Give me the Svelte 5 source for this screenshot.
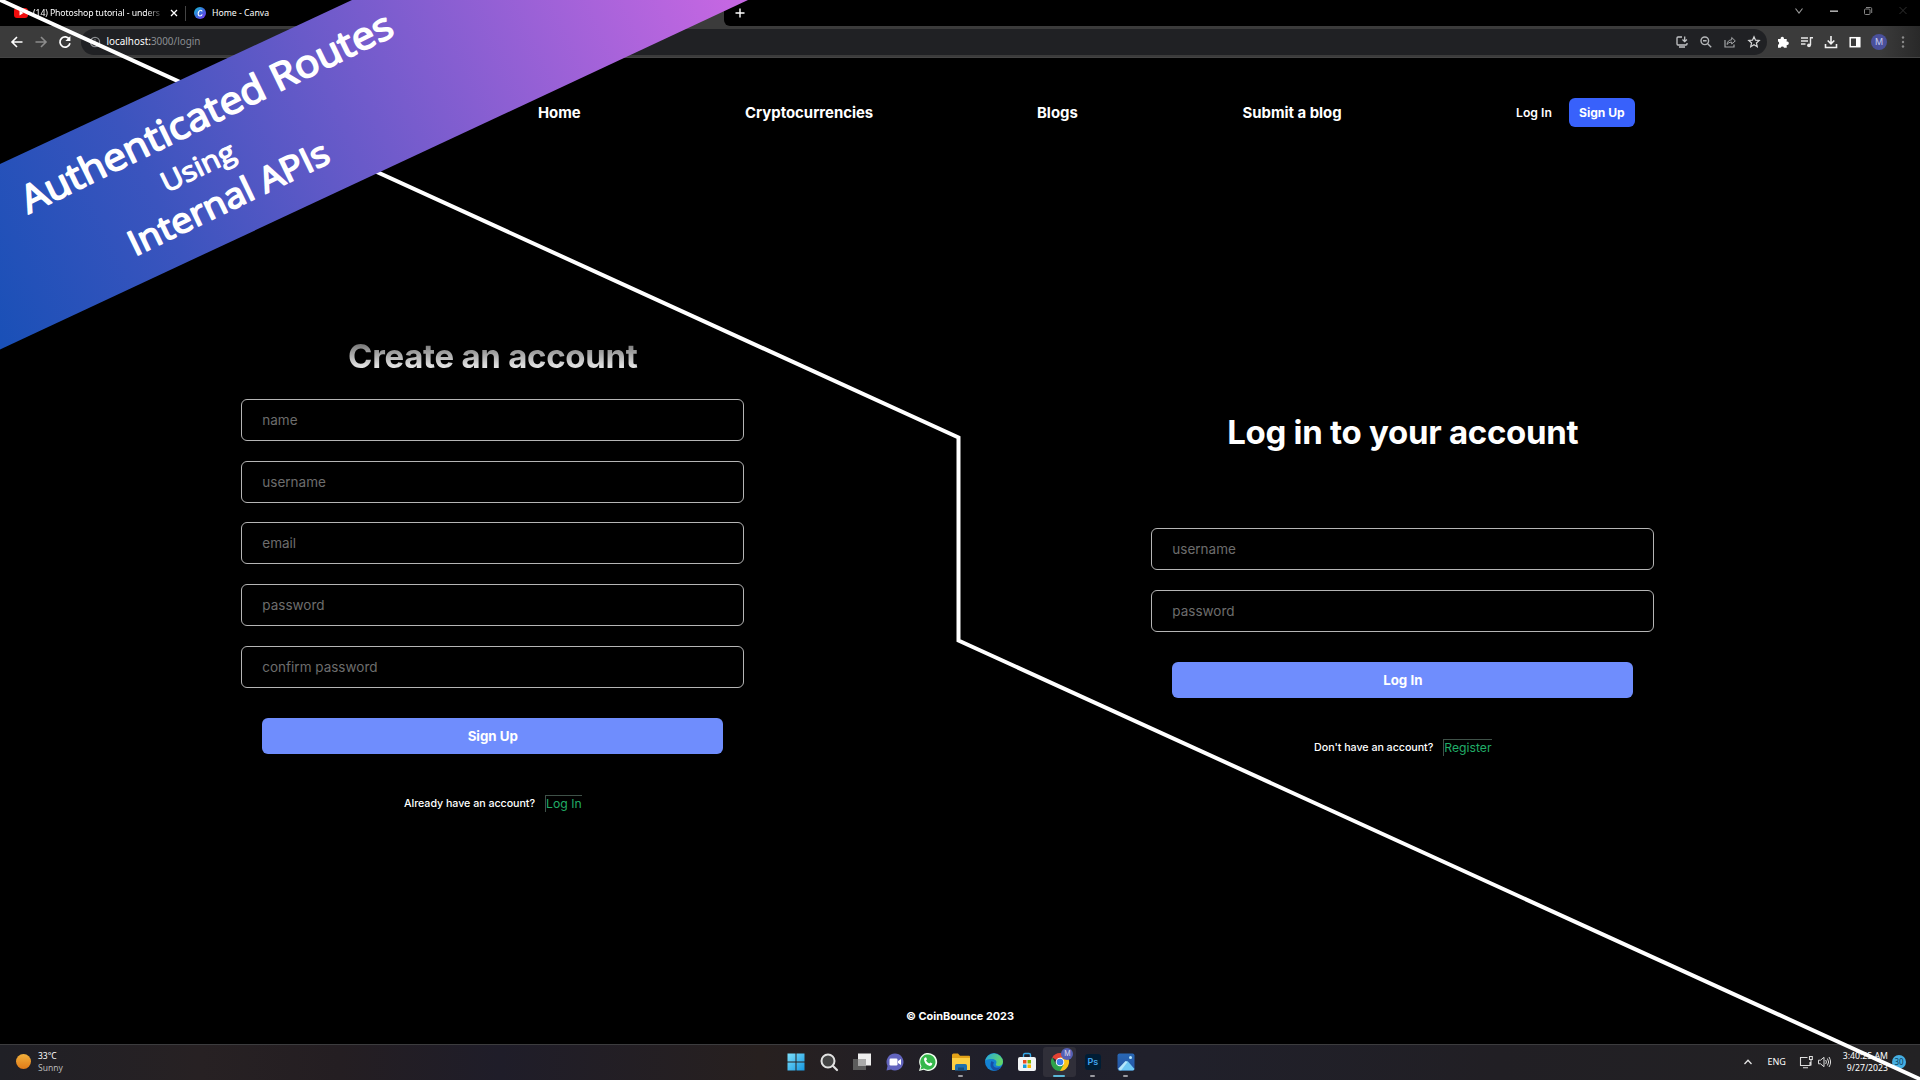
<script>
  const signupFields = ['name', 'username', 'email', 'password', 'confirm password'];
  const loginFields = ['username', 'password'];
</script>

<div class="desktop">
  <div class="tabs">
    <div class="tab first">
      <svg class="yt" width="16" height="16" viewBox="0 0 16 16"><rect x="1" y="3" width="14" height="10" rx="3" fill="#f00c0c" /><path d="M6.5 5.5v5l4-2.5z" fill="#fff" /></svg>
      <span class="tabtitle">(14) Photoshop tutorial - unders</span>
      <svg width="8" height="8" viewBox="0 0 8 8"><path d="M1 1l6 6M7 1l-6 6" stroke="#fff" stroke-width="1.3" /></svg>
    </div>
    <i class="sep"></i>
    <div class="tab second">
      <svg width="12" height="12" viewBox="0 0 12 12"><defs><linearGradient id="cv" x1="0" y1="0" x2="1" y2="1"><stop offset="0" stop-color="#16c2cf" /><stop offset=".5" stop-color="#3b6fe0" /><stop offset="1" stop-color="#7b2ff0" /></linearGradient></defs><circle cx="6" cy="6" r="6" fill="url(#cv)" /><path d="M8 4.6C8 3 5.9 2.8 4.8 4.6S4 9 5.800 9 8 8 8.200 7.400" fill="none" stroke="#fff" stroke-width="1.100" /></svg>
      <span>Home - Canva</span>
    </div>
    <div class="active"></div>
    <div class="strip">
      <svg width="10" height="10" viewBox="0 0 10 10"><path d="M5 .5v9M.5 5h9" stroke="#fff" stroke-width="1.400" /></svg>
      <div class="win">
        <svg width="12" height="12" viewBox="0 0 12 12"><path d="M2.500 3.500L6 8l3.500-4.500" fill="none" stroke="#9a9a9a" stroke-width="1.100" /></svg>
        <svg width="12" height="12" viewBox="0 0 12 12"><path d="M2 6.200h8" stroke="#aaa" stroke-width="1.600" /></svg>
        <svg width="12" height="12" viewBox="0 0 12 12"><rect x="2.500" y="4" width="5.500" height="5.500" rx="1" fill="none" stroke="#858585" /><path d="M4 2.500h4.500q1.200 0 1.200 1.200V8" fill="none" stroke="#858585" /></svg>
        <svg width="12" height="12" viewBox="0 0 12 12"><path d="M2.500 2l7 7M9.500 2l-7 7" stroke="#303030" /></svg>
      </div>
    </div>
  </div>

  <div class="toolbar">
    <div class="nav">
      <svg width="14" height="14" viewBox="0 0 14 14"><path d="M12.500 7H2.300M7 2L2 7l5 5" fill="none" stroke="#fff" stroke-width="1.600" /></svg>
      <svg width="14" height="14" viewBox="0 0 14 14"><path d="M1.500 7h10.200M7 2l5 5-5 5" fill="none" stroke="#8c8c8c" stroke-width="1.600" /></svg>
      <svg width="14" height="14" viewBox="0 0 14 14"><path d="M11.500 4.500A5.100 5.100 0 1 0 12 8.300" fill="none" stroke="#fff" stroke-width="1.700" /><path d="M12.400 1v5h-5z" fill="#fff" /></svg>
    </div>
    <div class="url">
      <svg width="12" height="12" viewBox="0 0 12 12"><circle cx="6" cy="6" r="4.600" fill="none" stroke="#8a8d91" stroke-width="1.200" /><path d="M6 5.300v3.300M6 3.200v1.200" stroke="#8a8d91" stroke-width="1.200" /></svg>
      <span class="addr">localhost:<em>3000/login</em></span>
      <div class="inurl">
        <svg width="14" height="14" viewBox="0 0 14 14"><path d="M7 2H3q-1 0-1 1v6q0 1 1 1h8q1 0 1-1V8M4 12h6M9.700 1.500v5M7.500 4.500L9.700 6.700l2.200-2.200" fill="none" stroke="#c2c4c6" stroke-width="1.300" /></svg>
        <svg width="14" height="14" viewBox="0 0 14 14"><circle cx="5.800" cy="5.800" r="3.800" fill="none" stroke="#b4b6b8" stroke-width="1.400" /><path d="M8.700 8.700l3.500 3.500M4 5.800h3.600" stroke="#b4b6b8" stroke-width="1.400" /></svg>
        <svg width="14" height="14" viewBox="0 0 14 14"><path d="M2 5v7h9V9.500" fill="none" stroke="#a4a6a8" stroke-width="1.200" /><path d="M4 9.500q.5-4.500 4.700-4.700V2.500l3.600 3.400L8.700 9V7Q5.500 7 4 9.500z" fill="none" stroke="#a4a6a8" stroke-width="1" /></svg>
        <svg width="14" height="14" viewBox="0 0 14 14"><path d="M7 1.700l1.500 3.500 3.700.3-2.800 2.500.9 3.700L7 9.700l-3.300 2 .9-3.700L1.800 5.500l3.700-.3z" fill="none" stroke="#d6d7d8" stroke-width="1.200" /></svg>
      </div>
    </div>
    <div class="ext">
      <svg width="14" height="14" viewBox="0 0 14 14"><path d="M2 4h2.700a1.700 1.700 0 1 1 3.200 0h2.800v2.700a1.700 1.700 0 1 1 0 3.300v2.700H8a1.700 1.700 0 0 0-3.300 0H2V9.800a1.700 1.700 0 0 0 0-3.200z" fill="#fff" /></svg>
      <svg width="14" height="14" viewBox="0 0 14 14"><path d="M1 3h7M1 6h7M1 9h4.500M10.500 10V2.700H13" stroke="#e8e8e8" stroke-width="1.400" fill="none" /><circle cx="9" cy="10.300" r="1.900" fill="#e8e8e8" /></svg>
      <svg width="14" height="14" viewBox="0 0 14 14"><path d="M7 1v7.500M3.700 5.500L7 8.800l3.300-3.300M1.500 9v3.500h11V9" stroke="#f2f2f2" stroke-width="1.600" fill="none" /></svg>
      <svg width="14" height="14" viewBox="0 0 14 14"><rect x="2.200" y="2.700" width="9.600" height="9" fill="none" stroke="#fff" stroke-width="1.500" /><path d="M8 2.500h4v9H8z" fill="#fff" /></svg>
      <span class="avatar">M</span>
      <svg width="14" height="14" viewBox="0 0 14 14" fill="#8a8a8a"><circle cx="7" cy="2.500" r="1.200" /><circle cx="7" cy="7" r="1.200" /><circle cx="7" cy="11.500" r="1.200" /></svg>
    </div>
  </div>

  <main>
    <nav class="sitenav">
      <a class="n1">Home</a><a class="n2">Cryptocurrencies</a><a class="n3">Blogs</a><a class="n4">Submit a blog</a>
      <div class="auth"><span>Log In</span><b>Sign Up</b></div>
    </nav>
    <div class="forms">
      <section class="form signup">
        <h1 class="faded">Create an account</h1>
        {#each signupFields as f}<input placeholder={f} />{/each}
        <button>Sign Up</button>
        <p><span class="have">Already have an account?</span><a class="link">Log In</a></p>
      </section>
      <section class="form login">
        <h1>Log in to your account</h1>
        {#each loginFields as f}<input placeholder={f} />{/each}
        <button>Log In</button>
        <p><span class="have">Don't have an account?</span><a class="link">Register</a></p>
      </section>
    </div>
    <footer>© CoinBounce 2023</footer>
  </main>

  <div class="taskbar">
    <div class="weather">
      <i class="sun"></i>
      <div><div class="deg">33°C</div><div class="sky">Sunny</div></div>
    </div>
    <div class="apps">
      <div class="app"><svg width="20" height="20" viewBox="0 0 20 20"><defs><linearGradient id="wn" x1="0" y1="0" x2="1" y2="1"><stop offset="0" stop-color="#7de0fb" /><stop offset="1" stop-color="#1597e0" /></linearGradient></defs><path d="M1.500 1.500h8v8h-8zM10.500 1.500h8v8h-8zM1.500 10.500h8v8h-8zM10.500 10.500h8v8h-8z" fill="url(#wn)" /></svg></div>
      <div class="app"><svg width="20" height="20" viewBox="0 0 20 20"><circle cx="9" cy="9" r="6.500" fill="#444" stroke="#e2e2e2" stroke-width="2" /><path d="M14 14l4 4" stroke="#e2e2e2" stroke-width="2.200" stroke-linecap="round" /></svg></div>
      <div class="app"><svg width="20" height="20" viewBox="0 0 20 20"><path d="M1 7h13v11H1z" fill="#5c5c5c" /><path d="M6 1.500h13v12H6z" fill="#eee" /><path d="M6 7h8v6.500H6z" fill="#aaa" /></svg></div>
      <div class="app"><svg width="20" height="20" viewBox="0 0 20 20"><path d="M10 1.500a8.500 8.500 0 1 1-4 16L1.500 18.500 2.500 14A8.500 8.500 0 0 1 10 1.500z" fill="#6264bd" /><rect x="4.500" y="6.500" width="8" height="7" rx="1.200" fill="#fff" /><path d="M13 9l3-2v6l-3-2z" fill="#fff" /></svg></div>
      <div class="app"><svg width="20" height="20" viewBox="0 0 20 20"><path d="M1 19l1.300-4.600A9 9 0 1 1 5.700 17.800z" fill="#f0fff0" /><path d="M2.500 17.500l1-3.300A7.600 7.600 0 1 1 6 16.600z" fill="#35b84b" /><path d="M6.500 6q1.500-1.500 2 0l.5 1.500-1 1q1 2.200 3.200 3l1.200-1 2 1q-.3 2.500-2.600 2.400Q6 12.500 6 7z" fill="#fff" /></svg></div>
      <div class="app"><svg width="20" height="20" viewBox="0 0 20 20"><path d="M1 3q0-1.500 1.500-1.500H7l2 2.300h9q1 0 1 1V8H1z" fill="#e3a218" /><path d="M1 6h18v12H1z" fill="#fccf43" /><path d="M4 18.500v-4.700q0-1.800 1.800-1.800h8.400q1.800 0 1.800 1.800v4.700z" fill="#1f70ad" /><path d="M7 15.500h6v3H7z" fill="#174f7c" /></svg><i class="dot"></i></div>
      <div class="app"><svg width="20" height="20" viewBox="0 0 20 20"><defs><linearGradient id="eg" x1="0" y1="0" x2="1" y2=".3"><stop offset="0" stop-color="#25a7e0" /><stop offset="1" stop-color="#62d56a" /></linearGradient></defs><circle cx="10" cy="10" r="9" fill="#1482d2" /><path d="M1.200 9A9 9 0 0 1 19 9.500c0 3-2 4.500-4.500 4.500-2 0-3.200-1-2.500-2 1.500-2.500-.5-5-4-5-3 0-6 .5-6.800 2z" fill="url(#eg)" /><path d="M7.500 9q-3 5 2 9.500 5 .5 7.500-3.500-6 2-7.500-1-.8-2 .5-3.500z" fill="#1550a8" /></svg></div>
      <div class="app"><svg width="20" height="20" viewBox="0 0 20 20"><path d="M6.500 6V3q0-1.500 1.500-1.500h4q1.500 0 1.500 1.500v3" fill="none" stroke="#34a8e8" stroke-width="1.400" /><rect x="1" y="5" width="18" height="14" rx="2" fill="#f2f5f7" /><path d="M6 8h3.500v3.500H6z" fill="#ee4e22" /><path d="M10.500 8H14v3.500h-3.500z" fill="#7eb900" /><path d="M6 12.500h3.500V16H6z" fill="#119edc" /><path d="M10.500 12.500H14V16h-3.500z" fill="#fbb700" /></svg></div>
      <div class="app on"><svg width="20" height="20" viewBox="0 0 20 20"><path d="M10 10L2.200 5.500A9 9 0 0 1 17.800 5.500z" fill="#e34234" /><path d="M10 10V5.500h7.800A9 9 0 0 1 10 19z" fill="#fbc51a" /><path d="M10 10l3.500 3L10 19A9 9 0 0 1 2.200 5.500L6 12z" fill="#2ea44b" /><circle cx="10" cy="10" r="4.300" fill="#fff" /><circle cx="10" cy="10" r="3.300" fill="#3f80ea" /></svg><i class="bar"></i><span class="badge">M</span></div>
      <div class="app"><span class="ps">Ps</span><i class="dot"></i></div>
      <div class="app"><svg width="20" height="20" viewBox="0 0 20 20"><defs><linearGradient id="ph" x1="0" y1="0" x2="0" y2="1"><stop offset="0" stop-color="#2867b4" /><stop offset="1" stop-color="#2454a3" /></linearGradient></defs><rect x="1.500" y="1.500" width="17" height="17" rx="2" fill="url(#ph)" /><path d="M2.500 18L10 9.500q1-1 2 0l6.500 7.500q-.5 1.500-2 1.500H4q-1.500 0-1.500-.5z" fill="#6fc8f4" /><path d="M2 17l7.500-8 2 1L5 18.500z" fill="#b5e7fb" /><circle cx="14.500" cy="5.500" r="1.500" fill="#b9e9fd" /></svg><i class="dot"></i></div>
    </div>
    <div class="tray">
      <svg width="10" height="10" viewBox="0 0 10 10"><path d="M1.500 7L5 3.300 8.500 7" fill="none" stroke="#e4e4e4" stroke-width="1.300" /></svg>
      <span class="eng">ENG</span>
      <svg width="14" height="14" viewBox="0 0 14 14"><path d="M8.500 2.500H1.500v8H11V7M4 12.700h5M10.500 1.500h2.800v3h-2.800zM12 4.500v6" fill="none" stroke="#ddd" stroke-width="1.100" /></svg>
      <svg width="14" height="14" viewBox="0 0 14 14"><path d="M1.500 5.200h2L7 2.300v9.400L3.500 8.800h-2zM8.700 5q1.500 2 0 4M10.400 3.500q2.600 3.500 0 7M12 2q3.200 5 0 10" fill="none" stroke="#ddd" stroke-width="1" /></svg>
      <div class="clock"><div>3:40:25 AM</div><div>9/27/2023</div></div>
      <span class="count">30</span>
    </div>
  </div>

  <svg class="overlay" width="1920" height="1080" viewBox="0 0 1920 1080">
    <defs>
      <linearGradient id="rb" gradientUnits="userSpaceOnUse" x1="0" y1="340" x2="730" y2="0">
        <stop offset="0" stop-color="#1a50b7" /><stop offset=".25" stop-color="#3b54be" /><stop offset=".5" stop-color="#695ac9" /><stop offset="1" stop-color="#c567e2" />
      </linearGradient>
    </defs>
    <path d="M-2 -1L958.500 437.500V640.500L1922 1080" fill="none" stroke="#fff" stroke-width="4" />
    <path d="M0 164L352 0H748L0 349.500z" fill="url(#rb)" />
    <g class="ribbon">
      <text transform="translate(28.500 214) rotate(-26)" font-size="38" textLength="409" lengthAdjust="spacingAndGlyphs">Authenticated Routes</text>
      <text class="mid" transform="translate(166.500 193) rotate(-26)" font-size="27.500" textLength="79" lengthAdjust="spacingAndGlyphs">Using</text>
      <text transform="translate(135 256.500) rotate(-25.700)" font-size="34.500" textLength="219" lengthAdjust="spacingAndGlyphs">Internal APIs</text>
    </g>
  </svg>
</div>

<style>
  :global(body) { background: #000; overflow: hidden; }
  .desktop { position: relative; width: 1920px; height: 1080px; background: #000; color: #fff; display: flex; flex-direction: column; overflow: hidden; font-family: Inter, sans-serif; }
  svg { display: block; flex: none; }
  .tabs { height: 26px; display: flex; align-items: center; font: 8.700px "Noto Sans", sans-serif; flex: none; background: #000; }
  .tab { display: flex; align-items: center; white-space: nowrap; box-sizing: border-box; padding-bottom: 1px; }
  .first { width: 185px; padding-left: 13px; }
  .yt { margin-right: 4px; }
  .tabtitle { width: 128px; margin-right: 9px; letter-spacing: -.1px; -webkit-mask-image: linear-gradient(90deg, #000 88%, rgba(0, 0, 0, .2)); mask-image: linear-gradient(90deg, #000 88%, rgba(0, 0, 0, .2)); }
  .sep { width: 1px; height: 15px; background: #444; }
  .second { width: 190px; padding-left: 8px; gap: 6px; }
  .active { flex: 0 0 348px; height: 26px; background: #3b3b3b; }
  .strip { flex: 1; height: 26px; background: #000; border-bottom-left-radius: 6px; box-shadow: -6px 6px 0 0 #3b3b3b; display: flex; align-items: center; padding-left: 11px; position: relative; }
  .win { margin-left: auto; display: flex; gap: 22.700px; padding: 0 11px 4px 0; }
  .toolbar { height: 32px; flex: none; background: linear-gradient(90deg, #3b3b3b 0 1880px, #292929); display: flex; align-items: center; box-sizing: border-box; border-bottom: 1px solid #444; position: relative; }
  .nav { display: flex; gap: 10px; padding-left: 9.500px; width: 71.500px; }
  .url { width: 1686px; height: 26px; border-radius: 13px; background: #202124; display: flex; align-items: center; padding: 0 6px 0 8px; box-sizing: border-box; }
  .addr { font: 9.900px "Noto Sans", sans-serif; margin-left: 5.500px; padding-bottom: 1px; }
  .addr em { font-style: normal; color: #8b8e92; }
  .inurl { margin-left: auto; display: flex; gap: 10px; }
  .ext { display: flex; gap: 10px; align-items: center; padding-left: 9px; }
  .avatar { width: 16px; height: 16px; margin: 0 -1px; border-radius: 50%; background: #4a509b; color: #c7cbef; font-size: 9px; line-height: 16px; text-align: center; }
  main { height: 986px; display: flex; flex-direction: column; flex: none; }
  .sitenav { display: flex; align-items: center; height: 30px; margin-top: 39px; font-weight: 700; font-size: 14.900px; padding-left: 538px; }
  .sitenav a { padding-top: 1px; }
  .n1 { width: 207px; } .n2 { width: 292px; } .n3 { width: 205.500px; } .n4 { width: 273.500px; }
  .auth { display: flex; align-items: center; gap: 17px; font-size: 12.200px; font-weight: 600; }
  .auth b { width: 66px; height: 29px; line-height: 29px; text-align: center; background: #3861fb; border-radius: 6px; font-weight: 700; font-size: 12.100px; }
  .forms { display: flex; padding-left: 241.300px; height: 840px; align-items: flex-start; }
  .form { width: 503px; display: flex; flex-direction: column; align-items: center; }
  .signup { padding-top: 208.500px; }
  .login { padding-top: 284.500px; margin-left: 407px; }
  h1 { margin: 0 0 23.300px; font-size: 33px; line-height: 40px; font-weight: 700; white-space: nowrap; letter-spacing: -.28px; }
  .login h1 { margin-bottom: 76.500px; }
  .faded { background: linear-gradient(#777 8px, #e0e0e0 30px); background-clip: text; -webkit-background-clip: text; color: transparent; }
  input { width: 503px; height: 42px; margin: 0 0 19.800px; box-sizing: border-box; border: 1px solid #b5b5b5; border-radius: 6px; background: transparent; padding: 0 20px; font: 13.500px Inter, sans-serif; color: #fff; }
  input::placeholder { color: #6d6d6d; opacity: 1; }
  button { width: 461px; height: 36px; margin-top: 10px; border: 0; border-radius: 6px; background: #6f8dfd; color: #fff; font: 700 13.300px Inter, sans-serif; }
  p { margin: 39.700px 0 0; height: 20px; display: flex; align-items: center; gap: 10px; white-space: nowrap; }
  .have { font-size: 10.700px; font-weight: 500; letter-spacing: -.04px; }
  .link { color: #20ad68; font-size: 12.200px; line-height: 16px; border-top: 1px solid #3f5148; border-left: 1px solid #3f5148; }
  footer { text-align: center; font-weight: 700; font-size: 10.900px; line-height: 14px; margin-top: 42px; }
  .taskbar { height: 36px; flex: none; box-sizing: border-box; border-top: 1px solid #3c3c3e; background: linear-gradient(90deg, #202026 0, #272123 200px, #241e22 340px, #1f1d29 500px, #27201f 760px, #1f1f2b 1000px, #20202b 1150px, #211f24 1500px, #232224); display: flex; align-items: center; }
  .weather { width: 779px; display: flex; align-items: center; padding: 0 0 2px 16px; box-sizing: border-box; gap: 7px; font: 8.500px/12px "Noto Sans", sans-serif; color: #fff; }
  .sky { color: #b9b9b9; }
  .sun { width: 15px; height: 15px; border-radius: 50%; background: linear-gradient(#f2b13c, #e07a18); }
  .apps { display: flex; height: 35px; }
  .app { width: 33.050px; height: 34px; display: flex; align-items: center; justify-content: center; position: relative; }
  .on { background: #302f39; border-radius: 3px; height: 30px; margin-top: 2px; }
  .dot, .bar { position: absolute; bottom: 2px; left: 14px; width: 5px; height: 2px; border-radius: 1px; background: #9a9aa0; }
  .bar { left: 10px; bottom: 0; width: 12px; background: #5bb8d8; }
  .badge { position: absolute; right: 3px; top: 1px; width: 12px; height: 12px; border-radius: 50%; background: #5560b4; font-size: 7px; line-height: 12px; text-align: center; color: #dde; }
  .ps { width: 16px; height: 16px; border-radius: 3px; background: #001d35; color: #42a5f0; font-size: 9px; font-weight: 600; line-height: 16px; text-align: center; }
  .tray { margin-left: auto; display: flex; align-items: center; padding: 0 14px 2px 0; font: 8.700px/12px "Noto Sans", sans-serif; }
  .eng { margin: 0 13px 0 14px; font-size: 9px; }
  .tray svg + svg { margin-left: 4px; }
  .clock { text-align: right; margin: 0 4px 0 12px; white-space: nowrap; }
  .count { width: 14px; height: 14px; border-radius: 50%; background: #45aee2; color: #0d3d5a; font-size: 8px; line-height: 14px; text-align: center; }
  .overlay { position: absolute; left: 0; top: 0; pointer-events: none; }
  .ribbon { fill: #fff; stroke: #fff; stroke-width: 1.700px; stroke-linejoin: round; font-family: "Open Sans", sans-serif; font-weight: 400; }
  .mid { stroke-width: 1.200px; }
</style>
